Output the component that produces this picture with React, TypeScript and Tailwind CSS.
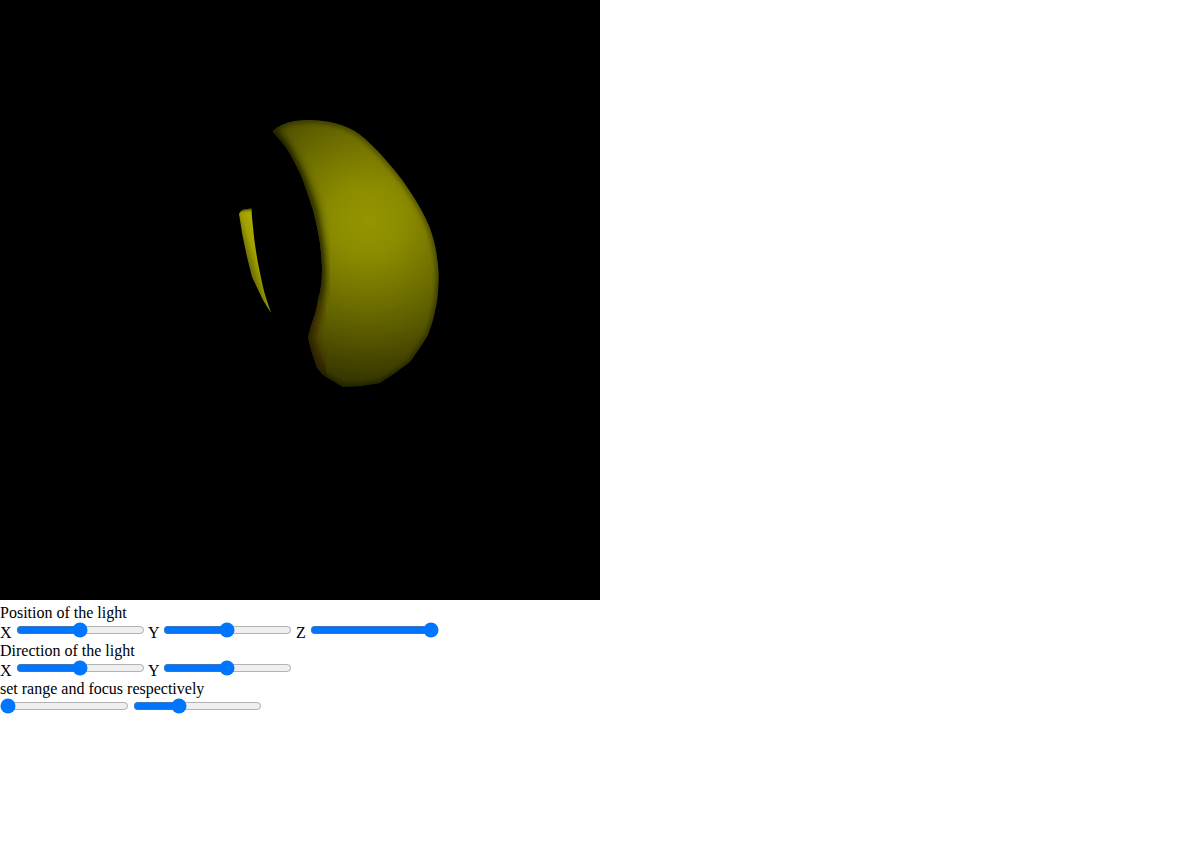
export default function App() {
  const crescent =
    "M272.700 131.500 C276 127.500 283 124 290 122 C296 120.500 303 120 309 120 C318 120 328 121.500 336 123.500 C345 126 353 129.500 359 134 C368 141 377 150 384 158 C393 168 402 179 409 190 C417 202 424 214 429 226 C433 236 436 247 437 258 C438.500 268 439 276 438.300 284 C438 292 437.500 298 436.500 304 L433 320 L428 335 L419 349 L410 362 L395 373 L380 383 L362 386 L343 387 L323 375 L317 368 L312 353 L308 338 C309 334 310 329 312 323 C315 315 317 307 318 300 C321 290 322 280 322 270 C322 261 321 252 320 243 C318 232 316 221 313 210 C309 197 305 185 300 173 C296 165 292 157 287 149 C282 142 277 137 272.700 131.500 Z";
  const sliver =
    "M239 214 C240 212 241.500 210 243.500 209.500 L251.500 208.500 C252 218 252.500 222 253 227 C254 239 256 252 258 263 C260 273 262 283 264 291 C266 299 269 306 271 313 C268 308 265.500 304 263 300 L252 277 L247 257 L242 233 C241 226 240 220 239 214 Z";

  const slider = "m-0 align-baseline";

  return (
    <div className="font-['Liberation_Serif',serif] text-[16px] leading-[normal] text-black bg-white">
      <div className="w-[600px] h-[600px] bg-black mb-[4px]">
        <svg width="600" height="600" viewBox="0 0 600 600" className="block">
          <defs>
            <radialGradient id="lit" gradientUnits="userSpaceOnUse" cx="368" cy="220" r="175">
              <stop offset="0" stopColor="#949400" />
              <stop offset="0.2" stopColor="#8c8c00" />
              <stop offset="0.48" stopColor="#6e6e00" />
              <stop offset="0.68" stopColor="#565600" />
              <stop offset="0.92" stopColor="#363600" />
              <stop offset="1" stopColor="#2c2c00" />
            </radialGradient>
            <linearGradient id="sliverFill" gradientUnits="userSpaceOnUse" x1="239" y1="238" x2="255" y2="233">
              <stop offset="0" stopColor="#666600" />
              <stop offset="0.6" stopColor="#a0a000" />
              <stop offset="1" stopColor="#aaaa00" />
            </linearGradient>
            <clipPath id="crescentClip">
              <path d={crescent} />
            </clipPath>
            <clipPath id="sliverClip">
              <path d={sliver} />
            </clipPath>
            <filter id="soft" x="-20%" y="-20%" width="140%" height="140%">
              <feGaussianBlur stdDeviation="2.500" />
            </filter>
            <filter id="softInner" x="-20%" y="-20%" width="140%" height="140%">
              <feGaussianBlur stdDeviation="5" />
            </filter>
            <filter id="softTop" x="-50%" y="-300%" width="200%" height="700%">
              <feGaussianBlur stdDeviation="1.500" />
            </filter>
          </defs>
          <path d={crescent} fill="url(#lit)" />
          <g clipPath="url(#crescentClip)">
            <path d={crescent} fill="none" stroke="#000000" strokeOpacity="0.5" strokeWidth="4" filter="url(#soft)" />
            <path
              d="M272.700 131 C292 157 305 185 313 210 C321 252 322 280 318 300"
              fill="none"
              stroke="#000000"
              strokeOpacity="0.6"
              strokeWidth="10"
              filter="url(#softInner)"
            />
            <path
              d="M318 300 C315 315 310 329 308 338 L317 368 L323 375"
              fill="none"
              stroke="#2a1200"
              strokeOpacity="0.75"
              strokeWidth="10"
              filter="url(#softInner)"
            />
          </g>
          <path d={sliver} fill="url(#sliverFill)" />
          <g clipPath="url(#sliverClip)">
            <path d="M237 209 L254 207" fill="none" stroke="#000000" strokeOpacity="0.8" strokeWidth="4" filter="url(#softTop)" />
          </g>
        </svg>
      </div>
      <div>Position of the light</div>
      <div>
        X <input type="range" className={slider} /> Y <input type="range" className={slider} /> Z{" "}
        <input type="range" defaultValue={100} className={slider} />
      </div>
      <div>Direction of the light</div>
      <div>
        X <input type="range" className={slider} /> Y <input type="range" className={slider} />
      </div>
      <div>set range and focus respectively</div>
      <div>
        <input type="range" defaultValue={0} className={slider} /> <input type="range" defaultValue={34} className={slider} />
      </div>
    </div>
  );
}
